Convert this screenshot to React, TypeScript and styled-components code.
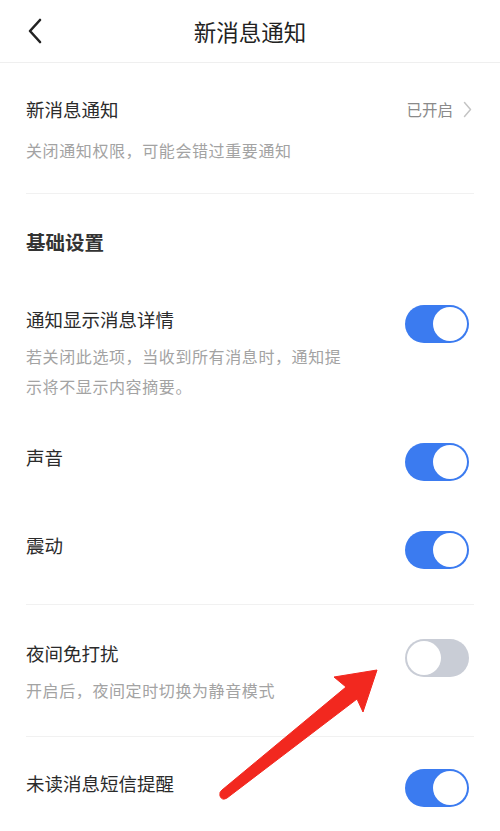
import { createGlobalStyle, styled } from 'styled-components';

const GlobalStyle = createGlobalStyle`
  html, body {
    margin: 0;
    padding: 0;
    background: #fff;
  }
  body {
    font-family: 'Noto Sans CJK SC', 'Noto Sans', sans-serif;
    color: #2b2b2b;
  }
`;

const Page = styled.div`
  position: relative;
  width: 500px;
  height: 831px;
  overflow: hidden;
  background: #fff;
`;

const Header = styled.header`
  display: grid;
  grid-template-columns: 1fr auto 1fr;
  align-items: center;
  height: 62px;
  border-bottom: 1px solid #efefef;
`;

const BackButton = styled.button`
  justify-self: start;
  display: flex;
  align-items: center;
  margin-left: 22px;
  padding: 4px;
  border: 0;
  background: none;
  color: #222;
`;

const HeaderTitle = styled.h1`
  margin: 0;
  font-size: 22.5px;
  font-weight: 400;
  line-height: 30px;
  color: #222;
`;

const Main = styled.main`
  padding: 0 26px;
`;

const Block = styled.section<{ $top: number; $bottom: number; $divider?: boolean }>`
  display: flex;
  flex-direction: column;
  gap: 50px;
  padding: ${(p) => p.$top}px 0 ${(p) => p.$bottom}px;
  border-bottom: ${(p) => (p.$divider ? '1px solid #f1f1f1' : 'none')};
`;

const LinkRow = styled.div`
  display: flex;
  align-items: center;
  justify-content: space-between;
  height: 26px;
`;

const Title = styled.span`
  font-size: 18.5px;
  line-height: 28px;
  color: #2b2b2b;
`;

const Status = styled.span`
  display: flex;
  align-items: center;
  gap: 10px;
  font-size: 15.5px;
  color: #8a8a8a;
  margin-right: 2px;
`;

const Heading = styled.h2`
  margin: 0;
  font-size: 19.5px;
  font-weight: 700;
  line-height: 26px;
  color: #333;
`;

const Item = styled.div`
  display: flex;
  flex-direction: column;
`;

const ItemHead = styled.div`
  display: flex;
  align-items: flex-start;
  justify-content: space-between;
`;

const Desc = styled.p<{ $first?: boolean }>`
  margin: ${(p) => (p.$first ? '15px 0 0' : '-2px 0 -8px')};
  max-width: 330px;
  font-size: 16px;
  letter-spacing: 0.6px;
  line-height: ${(p) => (p.$first ? '26px' : '30px')};
  color: #a3a3a3;
`;

const Track = styled.span<{ $on: boolean }>`
  display: flex;
  justify-content: ${(p) => (p.$on ? 'flex-end' : 'flex-start')};
  box-sizing: border-box;
  width: 64px;
  height: 38px;
  margin-right: 5px;
  padding: 2px;
  border-radius: 19px;
  background: ${(p) => (p.$on ? '#3b7bf0' : '#c9cdd6')};
`;

const Knob = styled.span`
  width: 34px;
  height: 34px;
  border-radius: 50%;
  background: #fff;
`;

const Arrow = styled.svg`
  position: absolute;
  left: 0;
  top: 0;
  pointer-events: none;
`;

function Toggle({ on }: { on: boolean }) {
  return (
    <Track $on={on}>
      <Knob />
    </Track>
  );
}

type Setting = {
  title: string;
  desc?: string;
  on: boolean;
};

function SettingItem({ title, desc, on }: Setting) {
  return (
    <Item>
      <ItemHead>
        <Title>{title}</Title>
        <Toggle on={on} />
      </ItemHead>
      {desc && <Desc>{desc}</Desc>}
    </Item>
  );
}

const basic: Setting[] = [
  {
    title: '通知显示消息详情',
    desc: '若关闭此选项，当收到所有消息时，通知提示将不显示内容摘要。',
    on: true,
  },
  { title: '声音', on: true },
  { title: '震动', on: true },
];

export default function App() {
  return (
    <Page>
      <GlobalStyle />
      <Header>
        <BackButton aria-label="返回">
          <svg width="18" height="26" viewBox="0 0 18 26" fill="none">
            <path d="M14 2 L4 13 L14 24" stroke="currentColor" strokeWidth="2.6" strokeLinecap="round" strokeLinejoin="round" />
          </svg>
        </BackButton>
        <HeaderTitle>新消息通知</HeaderTitle>
        <span />
      </Header>
      <Main>
        <Block $top={33} $bottom={30} $divider>
          <Item>
            <LinkRow>
              <Title>新消息通知</Title>
              <Status>
                已开启
                <svg width="9" height="17" viewBox="0 0 9 17" fill="none">
                  <path d="M1.5 1.5 L7.5 8.5 L1.5 15.5" stroke="#c4c4c4" strokeWidth="1.5" strokeLinecap="round" strokeLinejoin="round" />
                </svg>
              </Status>
            </LinkRow>
            <Desc $first>关闭通知权限，可能会错过重要通知</Desc>
          </Item>
        </Block>
        <Block $top={35} $bottom={35} $divider>
          <Heading>基础设置</Heading>
          {basic.map((s) => (
            <SettingItem key={s.title} {...s} />
          ))}
        </Block>
        <Block $top={34} $bottom={39} $divider>
          <SettingItem title="夜间免打扰" desc="开启后，夜间定时切换为静音模式" on={false} />
        </Block>
        <Block $top={32} $bottom={20}>
          <SettingItem title="未读消息短信提醒" on />
        </Block>
      </Main>
      <Arrow width="500" height="831" viewBox="0 0 500 831">
        <path
          d="M377 670 L363 712 L357 699 L227 798 Q222 801 220 796 Q219 792 222 790 L346 687 L334 677 Z"
          fill="#f2281f"
          stroke="#f2281f"
          strokeWidth="1"
          strokeLinejoin="round"
        />
      </Arrow>
    </Page>
  );
}
